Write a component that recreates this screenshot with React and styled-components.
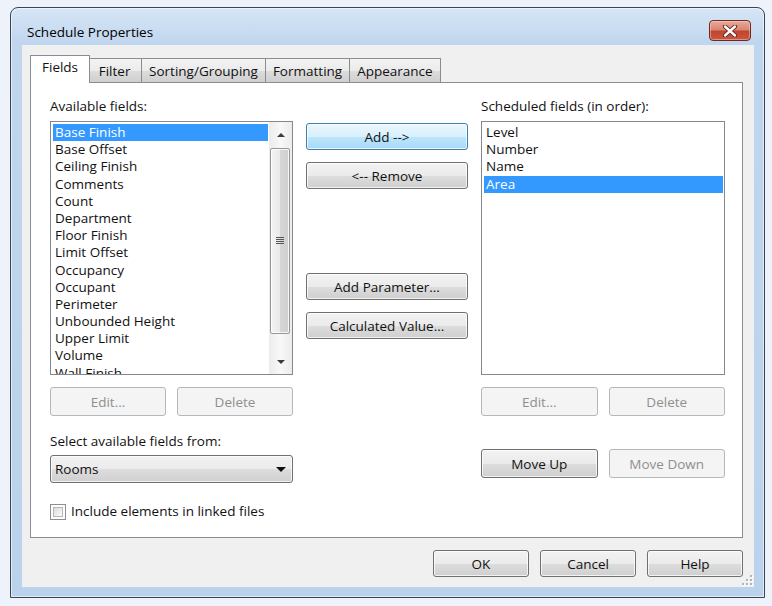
import React from 'react'
import styled, { createGlobalStyle, css } from 'styled-components'

const GlobalStyle = createGlobalStyle`
  html, body {
    margin: 0;
    padding: 0;
  }
  body {
    background: #eef3fb;
    font-family: "Open Sans", "Noto Sans", sans-serif;
    font-size: 13.5px;
    color: #111;
  }
`

const Page = styled.div`
  padding: 7px 0 0 10px;
`

const Window = styled.div`
  width: 755px;
  height: 591px;
  box-sizing: border-box;
  border: 1px solid #3a4452;
  border-radius: 8px 8px 0 0;
  background: linear-gradient(180deg, #d6e5f6 0px, #c0d6ee 36px, #bad2eb 100%);
  box-shadow: inset 0 0 0 1px rgba(255, 255, 255, 0.55);
  display: flex;
  flex-direction: column;
`

const TitleBar = styled.div`
  height: 37px;
  flex: none;
  display: flex;
  align-items: flex-end;
  justify-content: space-between;
  padding: 0 13px 4px 16px;
  box-sizing: border-box;
`

const Title = styled.div`
  line-height: 18px;
  color: #000;
`

const CloseButton = styled.div`
  width: 42px;
  height: 21px;
  box-sizing: border-box;
  border: 1px solid #6e2a20;
  border-radius: 4px;
  background: linear-gradient(180deg, #e9a99a 0%, #d98673 45%, #c2442f 55%, #c9573f 100%);
  box-shadow: inset 0 0 0 1px rgba(255, 220, 210, 0.45);
  display: flex;
  align-items: center;
  justify-content: center;
`

const Client = styled.div`
  position: relative;
  flex: 1;
  margin: 0 10px 10px 11px;
  padding: 10px 11px 10px 8px;
  background: #f0f0f0;
  display: flex;
  flex-direction: column;
`

const TabStrip = styled.div`
  height: 27px;
  display: flex;
  align-items: flex-end;
  padding-left: 3px;
  position: relative;
  z-index: 1;
`

const Tab = styled.div`
  height: 24px;
  min-width: 55px;
  padding: 1px 7px 0;
  box-sizing: border-box;
  border: 1px solid #898c95;
  border-bottom: none;
  margin-left: -1px;
  background: linear-gradient(180deg, #f3f3f3 0%, #ebebeb 50%, #dddddd 51%, #cfcfcf 100%);
  display: flex;
  align-items: center;
  justify-content: center;
  line-height: 17px;
  ${p =>
    p.$active &&
    css`
      height: 28px;
      margin: 0 -2px -1px -3px;
      padding: 0 11px 4px;
      background: #fff;
      position: relative;
      z-index: 2;
    `}
`

const Panel = styled.div`
  flex: 1;
  border: 1px solid #898c95;
  background: #fff;
  padding: 15px 0 0 19px;
  display: grid;
  grid-template-columns: 243px 162px 244px;
  column-gap: 13px;
  align-items: start;
`

const Column = styled.div`
  display: flex;
  flex-direction: column;
  padding-top: ${p => p.$top || 0}px;
`

const Label = styled.div`
  line-height: 17px;
  height: 17px;
  margin-top: ${p => p.$gap || 0}px;
  white-space: nowrap;
`

const ListBox = styled.div`
  margin-top: 6px;
  height: 254px;
  box-sizing: border-box;
  border: 1px solid #828790;
  background: #fff;
  display: flex;
  overflow: hidden;
`

const Items = styled.div`
  flex: 1;
  padding: 2px 1px 0 2px;
  overflow: hidden;
`

const Item = styled.div`
  line-height: 17.2px;
  height: 17.2px;
  padding-left: 2px;
  white-space: nowrap;
  ${p =>
    p.$selected &&
    css`
      background: #3399ff;
      color: #fff;
    `}
`

const ScrollBar = styled.div`
  width: 23px;
  flex: none;
  background: linear-gradient(90deg, #ececec 0%, #f8f8f8 50%, #ececec 100%);
  display: flex;
  flex-direction: column;
`

const ScrollArrow = styled.div`
  height: 25px;
  display: flex;
  align-items: center;
  justify-content: center;
  &::before {
    content: '';
    border-left: 4px solid transparent;
    border-right: 4px solid transparent;
    ${p =>
      p.$down
        ? css`
            border-top: 4px solid #3c3c3c;
          `
        : css`
            border-bottom: 4px solid #3c3c3c;
          `}
  }
`

const Track = styled.div`
  flex: 1;
  padding: 1px 2px 15px 1px;
  display: flex;
  flex-direction: column;
`

const Thumb = styled.div`
  flex: 1;
  border: 1px solid #979797;
  border-radius: 2px;
  background: linear-gradient(90deg, #f4f4f4 0%, #e9e9e9 50%, #d6d6d6 51%, #cfcfcf 100%);
  box-shadow: inset 0 0 0 1px rgba(255, 255, 255, 0.8);
  display: flex;
  align-items: center;
  justify-content: center;
`

const ButtonRow = styled.div`
  margin-top: ${p => p.$gap || 0}px;
  display: grid;
  grid-template-columns: 1fr 1fr;
  column-gap: 11px;
`

const Button = styled.div`
  height: ${p => p.$h || 27}px;
  width: ${p => (p.$w ? `${p.$w}px` : 'auto')};
  margin-top: ${p => p.$gap || 0}px;
  box-sizing: border-box;
  border: 1px solid #707070;
  border-radius: 3px;
  background: linear-gradient(180deg, #f2f2f2 0%, #ebebeb 50%, #dddddd 51%, #cfcfcf 100%);
  box-shadow: inset 0 0 0 1px rgba(255, 255, 255, 0.75);
  display: flex;
  align-items: center;
  justify-content: center;
  white-space: nowrap;
  color: #111;
  ${p =>
    p.$hot &&
    css`
      border-color: #3c7fb1;
      background: linear-gradient(180deg, #eaf6fd 0%, #d9f0fc 50%, #bee6fd 51%, #a7d9f5 100%);
    `}
  ${p =>
    p.$disabled &&
    css`
      border-color: #b4b8bb;
      background: #f4f4f4;
      box-shadow: none;
      color: #8f8f8f;
    `}
`

const Combo = styled.div`
  margin-top: 5px;
  height: 28px;
  box-sizing: border-box;
  border: 1px solid #707070;
  border-radius: 3px;
  background: linear-gradient(180deg, #f2f2f2 0%, #ebebeb 50%, #dddddd 51%, #cfcfcf 100%);
  box-shadow: inset 0 0 0 1px rgba(255, 255, 255, 0.75);
  display: flex;
  align-items: center;
  justify-content: space-between;
  padding: 0 6px 0 4px;
  &::after {
    content: '';
    border-left: 5px solid transparent;
    border-right: 5px solid transparent;
    border-top: 5px solid #111;
  }
`

const CheckRow = styled.label`
  margin-top: 20px;
  display: flex;
  align-items: center;
  gap: 5px;
  line-height: 17px;
  white-space: nowrap;
`

const CheckBox = styled.span`
  width: 16px;
  height: 16px;
  box-sizing: border-box;
  border: 1px solid #8e8f8f;
  background: #fff;
  padding: 2px;
  display: inline-flex;
  &::before {
    content: '';
    flex: 1;
    border: 1px solid #b6b6b6;
    background: linear-gradient(135deg, #dcdcdc 0%, #f2f2f2 70%, #fdfdfd 100%);
  }
`

const Footer = styled.div`
  margin-top: 12px;
  display: flex;
  justify-content: flex-end;
  gap: 11px;
`

const Grip = styled.svg`
  position: absolute;
  right: 1px;
  bottom: 1px;
`

const available = [
  'Base Finish',
  'Base Offset',
  'Ceiling Finish',
  'Comments',
  'Count',
  'Department',
  'Floor Finish',
  'Limit Offset',
  'Occupancy',
  'Occupant',
  'Perimeter',
  'Unbounded Height',
  'Upper Limit',
  'Volume',
  'Wall Finish',
]

const scheduled = ['Level', 'Number', 'Name', 'Area']

const tabs = ['Fields', 'Filter', 'Sorting/Grouping', 'Formatting', 'Appearance']

const CloseGlyph = () => (
  <svg width="16" height="12" viewBox="0 0 16 12">
    <path d="M3 1.5 L13 10.5 M13 1.5 L3 10.5" stroke="#5b1d14" strokeWidth="4.2" strokeLinecap="round" />
    <path d="M3 1.5 L13 10.5 M13 1.5 L3 10.5" stroke="#fff" strokeWidth="2.4" strokeLinecap="round" />
  </svg>
)

const GripLines = () => (
  <svg width="8" height="8" viewBox="0 0 8 8">
    {[0, 2, 4, 6].map(y => (
      <rect key={y} x="0" y={y} width="8" height="1" fill="#555" />
    ))}
  </svg>
)

const SizeGrip = () => (
  <Grip width="11" height="11" viewBox="0 0 11 11">
    {[
      [8, 0],
      [8, 4],
      [4, 4],
      [8, 8],
      [4, 8],
      [0, 8],
    ].map(([x, y]) => (
      <g key={`${x}-${y}`}>
        <rect x={x + 1} y={y + 1} width="2" height="2" fill="#fff" />
        <rect x={x} y={y} width="2" height="2" fill="#b0b4b8" />
      </g>
    ))}
  </Grip>
)

const App = () => {
  return (
    <>
      <GlobalStyle />
      <Page>
        <Window>
          <TitleBar>
            <Title>Schedule Properties</Title>
            <CloseButton>
              <CloseGlyph />
            </CloseButton>
          </TitleBar>
          <Client>
            <TabStrip>
              {tabs.map((t, i) => (
                <Tab key={t} $active={i === 0}>
                  {t}
                </Tab>
              ))}
            </TabStrip>
            <Panel>
              <Column>
                <Label>Available fields:</Label>
                <ListBox>
                  <Items>
                    {available.map((f, i) => (
                      <Item key={f} $selected={i === 0}>
                        {f}
                      </Item>
                    ))}
                  </Items>
                  <ScrollBar>
                    <ScrollArrow />
                    <Track>
                      <Thumb>
                        <GripLines />
                      </Thumb>
                    </Track>
                    <ScrollArrow $down />
                  </ScrollBar>
                </ListBox>
                <ButtonRow $gap={12}>
                  <Button $h={29} $disabled>
                    Edit...
                  </Button>
                  <Button $h={29} $disabled>
                    Delete
                  </Button>
                </ButtonRow>
                <Label $gap={17}>Select available fields from:</Label>
                <Combo>Rooms</Combo>
                <CheckRow>
                  <CheckBox />
                  Include elements in linked files
                </CheckRow>
              </Column>

              <Column $top={25}>
                <Button $hot>Add --&gt;</Button>
                <Button $gap={12}>&lt;-- Remove</Button>
                <Button $gap={84}>Add Parameter...</Button>
                <Button $gap={12}>Calculated Value...</Button>
              </Column>

              <Column>
                <Label>Scheduled fields (in order):</Label>
                <ListBox>
                  <Items>
                    {scheduled.map(f => (
                      <Item key={f} $selected={f === 'Area'}>
                        {f}
                      </Item>
                    ))}
                  </Items>
                </ListBox>
                <ButtonRow $gap={12}>
                  <Button $h={29} $disabled>
                    Edit...
                  </Button>
                  <Button $h={29} $disabled>
                    Delete
                  </Button>
                </ButtonRow>
                <ButtonRow $gap={33}>
                  <Button $h={29}>Move Up</Button>
                  <Button $h={29} $disabled>
                    Move Down
                  </Button>
                </ButtonRow>
              </Column>
            </Panel>
            <Footer>
              <Button $w={96}>OK</Button>
              <Button $w={96}>Cancel</Button>
              <Button $w={96}>Help</Button>
            </Footer>
            <SizeGrip />
          </Client>
        </Window>
      </Page>
    </>
  )
}

export default App
